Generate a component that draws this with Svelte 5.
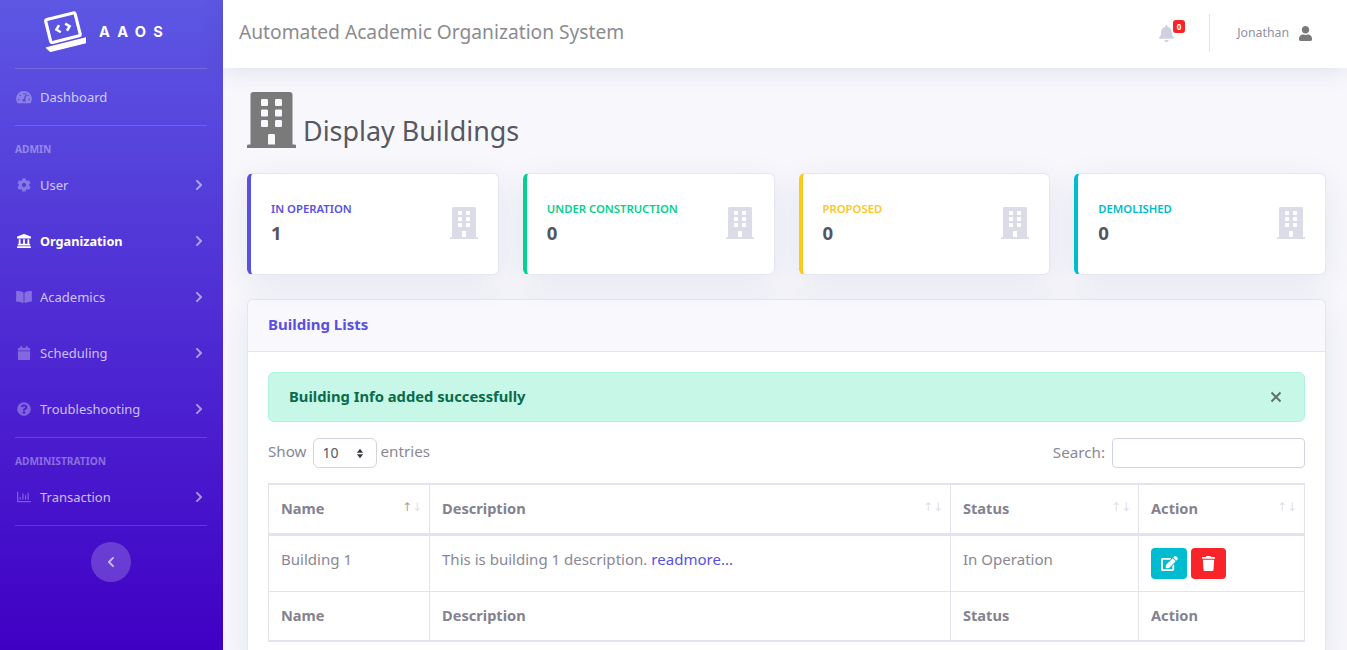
<script>
  const F = {
    building: "M436 480h-20V24c0-13.255-10.745-24-24-24H56C42.745 0 32 10.745 32 24v456H12c-6.627 0-12 5.373-12 12v20h448v-20c0-6.627-5.373-12-12-12zM128 76c0-6.627 5.373-12 12-12h40c6.627 0 12 5.373 12 12v40c0 6.627-5.373 12-12 12h-40c-6.627 0-12-5.373-12-12V76zm0 96c0-6.627 5.373-12 12-12h40c6.627 0 12 5.373 12 12v40c0 6.627-5.373 12-12 12h-40c-6.627 0-12-5.373-12-12v-40zm52 148h-40c-6.627 0-12-5.373-12-12v-40c0-6.627 5.373-12 12-12h40c6.627 0 12 5.373 12 12v40c0 6.627-5.373 12-12 12zm76 160h-64v-84c0-6.627 5.373-12 12-12h40c6.627 0 12 5.373 12 12v84zm64-172c0 6.627-5.373 12-12 12h-40c-6.627 0-12-5.373-12-12v-40c0-6.627 5.373-12 12-12h40c6.627 0 12 5.373 12 12v40zm0-96c0 6.627-5.373 12-12 12h-40c-6.627 0-12-5.373-12-12v-40c0-6.627 5.373-12 12-12h40c6.627 0 12 5.373 12 12v40zm0-96c0 6.627-5.373 12-12 12h-40c-6.627 0-12-5.373-12-12V76c0-6.627 5.373-12 12-12h40c6.627 0 12 5.373 12 12v40z",
    chevR: "M285.476 272.971L91.132 467.314c-9.373 9.373-24.569 9.373-33.941 0l-22.667-22.667c-9.357-9.357-9.375-24.522-.04-33.901L188.505 256 34.484 101.255c-9.335-9.379-9.317-24.544.04-33.901l22.667-22.667c9.373-9.373 24.569-9.373 33.941 0L285.475 239.03c9.373 9.372 9.373 24.568.001 33.941z",
    chevL: "M34.52 239.03L228.87 44.69c9.37-9.37 24.57-9.37 33.94 0l22.67 22.67c9.36 9.36 9.37 24.52.04 33.9L131.49 256l154.02 154.75c9.34 9.38 9.32 24.54-.04 33.9l-22.67 22.67c-9.37 9.37-24.57 9.37-33.94 0L34.52 272.97c-9.37-9.37-9.37-24.57 0-33.94z",
    bell: "M224 512c35.32 0 63.97-28.65 63.97-64H160.03c0 35.35 28.65 64 63.97 64zm215.39-149.71c-19.32-20.76-55.47-51.99-55.47-154.29 0-77.7-54.48-139.9-127.94-155.16V32c0-17.67-14.32-32-31.98-32s-31.98 14.33-31.98 32v20.84C118.56 68.1 64.08 130.3 64.08 208c0 102.3-36.15 133.53-55.47 154.29-6 6.45-8.66 14.16-8.61 21.71.11 16.4 12.98 32 32.1 32h383.8c19.12 0 32-15.6 32.1-32 .05-7.55-2.61-15.27-8.61-21.71z",
    user: "M224 256c70.7 0 128-57.3 128-128S294.7 0 224 0 96 57.3 96 128s57.3 128 128 128zm89.6 32h-16.7c-22.2 10.2-46.9 16-72.9 16s-50.6-5.8-72.9-16h-16.7C60.2 288 0 348.2 0 422.4V464c0 26.5 21.5 48 48 48h352c26.5 0 48-21.5 48-48v-41.6c0-74.2-60.2-134.4-134.4-134.4z",
    trash: "M432 32H312l-9.4-18.7A24 24 0 0 0 281.1 0H166.8a23.72 23.72 0 0 0-21.4 13.3L136 32H16A16 16 0 0 0 0 48v32a16 16 0 0 0 16 16h416a16 16 0 0 0 16-16V48a16 16 0 0 0-16-16zM53.2 467a48 48 0 0 0 47.9 45h245.8a48 48 0 0 0 47.9-45L416 128H32z",
    edit: "M402.6 83.2l90.2 90.2c3.8 3.8 3.8 10 0 13.8L274.4 405.6l-92.8 10.3c-12.4 1.4-22.9-9.1-21.5-21.5l10.3-92.8L388.8 83.2c3.8-3.8 10-3.8 13.8 0zm162-22.9l-48.8-48.8c-15.2-15.2-39.9-15.2-55.2 0l-35.4 35.4c-3.8 3.8-3.8 10 0 13.8l90.2 90.2c3.8 3.8 10 3.8 13.8 0l35.4-35.4c15.2-15.3 15.2-40 0-55.2zM384 346.2V448H64V128h229.8c3.2 0 6.2-1.3 8.5-3.5l40-40c7.6-7.6 2.2-20.5-8.5-20.5H48C21.5 64 0 85.5 0 112v352c0 26.5 21.5 48 48 48h352c26.5 0 48-21.5 48-48V306.2c0-10.7-12.9-16-20.5-8.5l-40 40c-2.2 2.3-3.5 5.3-3.5 8.5z",
    landmark: "M501.62 92.11L267.24 2.04a31.958 31.958 0 0 0-22.47 0L10.38 92.11A16.001 16.001 0 0 0 0 107.09V144c0 8.84 7.16 16 16 16h480c8.84 0 16-7.16 16-16v-36.91c0-6.67-4.14-12.64-10.38-14.98zM64 192v160H48c-8.84 0-16 7.16-16 16v48h448v-48c0-8.84-7.16-16-16-16h-16V192h-64v160h-96V192h-64v160h-96V192H64zm432 256H16c-8.84 0-16 7.16-16 16v32c0 8.84 7.16 16 16 16h480c8.84 0 16-7.16 16-16v-32c0-8.84-7.16-16-16-16z",
    book: "M542.22 32.05c-54.8 3.11-163.72 14.43-230.96 55.59-4.64 2.84-7.27 7.89-7.27 13.17v363.87c0 11.55 12.63 18.85 23.28 13.49 69.18-34.82 169.23-44.32 218.7-46.92 16.89-.89 30.02-14.43 30.02-30.66V62.75c.01-17.71-15.35-31.74-33.77-30.7zM264.73 87.64C197.5 46.48 88.58 35.17 33.78 32.05 15.36 31.01 0 45.04 0 62.75V400.6c0 16.24 13.13 29.78 30.02 30.66 49.49 2.6 149.59 12.11 218.77 46.95 10.62 5.35 23.21-1.94 23.21-13.46V100.63c0-5.29-2.62-10.14-7.27-12.99z",
    calendar: "M12 192h424c6.6 0 12 5.4 12 12v260c0 26.5-21.5 48-48 48H48c-26.5 0-48-21.5-48-48V204c0-6.6 5.4-12 12-12zm436-44v-36c0-26.5-21.5-48-48-48h-48V12c0-6.6-5.4-12-12-12h-40c-6.6 0-12 5.4-12 12v52H160V12c0-6.6-5.4-12-12-12h-40c-6.6 0-12 5.4-12 12v52H48C21.5 64 0 85.5 0 112v36c0 6.6 5.4 12 12 12h424c6.6 0 12-5.4 12-12z",
    question: "M504 256c0 136.997-111.043 248-248 248S8 392.997 8 256C8 119.083 119.043 8 256 8s248 111.083 248 248zM262.655 90c-54.497 0-89.255 22.957-116.549 63.758-3.536 5.286-2.353 12.415 2.715 16.258l34.699 26.31c5.205 3.947 12.621 3.008 16.665-2.122 17.864-22.658 30.113-35.797 57.303-35.797 20.429 0 45.698 13.148 45.698 32.958 0 14.976-12.363 22.667-32.534 33.976C247.128 238.528 216 254.941 216 296v4c0 6.627 5.373 12 12 12h56c6.627 0 12-5.373 12-12v-1.333c0-28.462 83.186-29.647 83.186-106.667 0-58.002-60.165-102-116.531-102zM256 338c-25.365 0-46 20.635-46 46 0 25.364 20.635 46 46 46s46-20.636 46-46c0-25.365-20.635-46-46-46z",
    chart: "M396.8 352h22.4c6.4 0 12.8-6.4 12.8-12.8V108.8c0-6.4-6.4-12.8-12.8-12.8h-22.4c-6.4 0-12.8 6.4-12.8 12.8v230.4c0 6.4 6.4 12.8 12.8 12.8zm-192 0h22.4c6.4 0 12.8-6.4 12.8-12.8V140.8c0-6.4-6.4-12.8-12.8-12.8h-22.4c-6.4 0-12.8 6.4-12.8 12.8v198.4c0 6.4 6.4 12.8 12.8 12.8zm96 0h22.4c6.4 0 12.8-6.4 12.8-12.8V204.8c0-6.4-6.4-12.8-12.8-12.8h-22.4c-6.4 0-12.8 6.4-12.8 12.8v134.4c0 6.4 6.4 12.8 12.8 12.8zm-192 0h22.4c6.4 0 12.8-6.4 12.8-12.8v-70.4c0-6.4-6.4-12.8-12.8-12.8h-22.4c-6.4 0-12.8 6.4-12.8 12.8v70.4c0 6.4 6.4 12.8 12.8 12.8zM496 400H48V80c0-8.84-7.16-16-16-16H16C7.16 64 0 71.16 0 80v336c0 17.67 14.33 32 32 32h464c8.84 0 16-7.16 16-16v-16c0-8.84-7.16-16-16-16z",
    cog: "M487.4 315.7l-42.6-24.6c4.3-23.2 4.3-47 0-70.2l42.6-24.6c4.9-2.8 7.1-8.6 5.5-14-11.1-35.6-30-67.8-54.7-94.6-3.8-4.1-10-5.1-14.8-2.3L380.8 110c-17.9-15.4-38.5-27.3-60.8-35.1V25.8c0-5.6-3.9-10.5-9.4-11.7-36.7-8.2-74.3-7.8-109.2 0-5.5 1.2-9.4 6.1-9.4 11.7V75c-22.2 7.9-42.8 19.8-60.8 35.1L88.7 85.5c-4.9-2.8-11-1.9-14.8 2.3-24.7 26.7-43.6 58.9-54.7 94.6-1.7 5.4.6 11.2 5.5 14L67.3 221c-4.3 23.2-4.3 47 0 70.2l-42.6 24.6c-4.9 2.8-7.1 8.6-5.5 14 11.1 35.6 30 67.8 54.7 94.6 3.8 4.1 10 5.1 14.8 2.3l42.6-24.6c17.9 15.4 38.5 27.3 60.8 35.1v49.2c0 5.6 3.9 10.5 9.4 11.7 36.7 8.2 74.3 7.8 109.2 0 5.5-1.2 9.4-6.1 9.4-11.7v-49.2c22.2-7.9 42.8-19.8 60.8-35.1l42.6 24.6c4.9 2.8 11 1.9 14.8-2.3 24.7-26.7 43.6-58.9 54.7-94.6 1.5-5.5-.7-11.3-5.6-14.1zM256 336c-44.1 0-80-35.9-80-80s35.9-80 80-80 80 35.9 80 80-35.9 80-80 80z",
    gauge: "M288 32C128.94 32 0 160.94 0 320c0 52.8 14.25 102.26 39.06 144.8 5.61 9.62 16.3 15.2 27.44 15.2h443c11.14 0 21.83-5.58 27.44-15.2C561.75 422.26 576 372.8 576 320c0-159.06-128.94-288-288-288zm0 64c14.71 0 26.58 10.13 30.32 23.65-1.11 2.26-2.64 4.23-3.45 6.67l-9.22 27.67c-5.13 3.49-10.97 6.01-17.64 6.01-17.67 0-32-14.33-32-32S270.33 96 288 96zM96 384c-17.67 0-32-14.33-32-32s14.33-32 32-32 32 14.33 32 32-14.33 32-32 32zm48-160c-17.67 0-32-14.33-32-32s14.33-32 32-32 32 14.33 32 32-14.33 32-32 32zm246.77-72.41l-61.33 184C343.13 347.33 352 364.54 352 384c0 11.72-3.38 22.55-8.88 32H232.88c-5.5-9.45-8.88-20.28-8.88-32 0-33.94 26.5-61.43 59.9-63.59l61.34-184.01c4.17-12.56 17.73-19.45 30.36-15.17 12.57 4.19 19.35 17.79 15.17 30.36zm14.66 57.2l15.52-46.55c3.47-1.29 7.13-2.23 11.05-2.23 17.67 0 32 14.33 32 32s-14.33 32-32 32c-11.38-.01-20.89-6.28-26.57-15.22zM480 384c-17.67 0-32-14.33-32-32s14.33-32 32-32 32 14.33 32 32-14.33 32-32 32z"
  };
  const stats = [
    { label: "In Operation", value: 1, color: "#5a50e4" },
    { label: "Under Construction", value: 0, color: "#04d28c" },
    { label: "Proposed", value: 0, color: "#ffc71c" },
    { label: "Demolished", value: 0, color: "#00bcd0" }
  ];
  const cols = ["Name", "Description", "Status", "Action"];
</script>

{#snippet icon(d, vb, cls)}
  <svg class={cls} viewBox="0 0 {vb} 512" aria-hidden="true"><path {d} fill="currentColor" /></svg>
{/snippet}

{#snippet navItem(label, d, vb, active = false, chev = true)}
  <div class="nav-item" class:active>
    <span class="nav-icon">{@render icon(d, vb, "ni")}</span>
    <span class="nav-label">{label}</span>
    {#if chev}{@render icon(F.chevR, 320, "chev")}{/if}
  </div>
{/snippet}

<div class="app">
  <aside class="sidebar">
    <div class="brand">
      <svg class="logo" viewBox="0 0 42 40" aria-hidden="true">
        <g transform="rotate(-14 21 20)" fill="none" stroke="#fff">
          <rect x="6.5" y="4.5" width="29" height="22.5" rx="1.5" stroke-width="3" />
          <path d="M18 12.5l-3.5 3.5 3.5 3.5M24 12.5l3.5 3.5-3.5 3.5" stroke-width="2.4" />
          <path d="M1 30.5h40l-2 4.5H4z" fill="#fff" stroke-width="1" stroke-linejoin="round" />
        </g>
      </svg>
      <span class="brand-text">AAOS</span>
    </div>
    <hr />
    {@render navItem("Dashboard", F.gauge, 576, false, false)}
    <hr />
    <div class="nav-head">ADMIN</div>
    {@render navItem("User", F.cog, 512)}
    {@render navItem("Organization", F.landmark, 512, true)}
    {@render navItem("Academics", F.book, 576)}
    {@render navItem("Scheduling", F.calendar, 448)}
    {@render navItem("Troubleshooting", F.question, 512)}
    <hr />
    <div class="nav-head">ADMINISTRATION</div>
    {@render navItem("Transaction", F.chart, 512)}
    <hr />
    <div class="toggle">{@render icon(F.chevL, 320, "toggle-i")}</div>
  </aside>

  <div class="right">
    <header class="topbar">
      <div class="top-title">Automated Academic Organization System</div>
      <div class="bell">
        {@render icon(F.bell, 448, "bell-i")}
        <span class="badge">0</span>
      </div>
      <div class="vdiv"></div>
      <span class="uname">Jonathan</span>
      {@render icon(F.user, 448, "user-i")}
    </header>

    <main class="main">
      <div class="page-head">
        {@render icon(F.building, 448, "head-i")}
        <h1>Display Buildings</h1>
      </div>

      <div class="stats">
        {#each stats as s}
          <div class="stat" style="border-left-color:{s.color}">
            <div class="stat-body">
              <div class="stat-label" style="color:{s.color}">{s.label}</div>
              <div class="stat-value">{s.value}</div>
            </div>
            {@render icon(F.building, 448, "stat-i")}
          </div>
        {/each}
      </div>

      <section class="panel">
        <div class="panel-head">Building Lists</div>
        <div class="panel-body">
          <div class="alert">
            <span>Building Info added successfully</span>
            <svg class="close" viewBox="0 0 12 12" aria-hidden="true"><path d="M1.5 1.5l9 9M10.5 1.5l-9 9" stroke="#5f6f69" stroke-width="1.9" /></svg>
          </div>
          <div class="controls">
            <div class="show">
              <span>Show</span>
              <div class="select">
                <span>10</span>
                <svg viewBox="0 0 10 14" class="sel-i" aria-hidden="true"><path d="M5 1l4 5H1zM5 13L1 8h8z" fill="#343a40" /></svg>
              </div>
              <span>entries</span>
            </div>
            <label class="search">Search:<input type="text" /></label>
          </div>
          <table>
            <colgroup><col class="c1" /><col class="c2" /><col class="c3" /><col class="c4" /></colgroup>
            <thead>
              <tr>
                {#each cols as c, i}
                  <th>
                    <div class="th-in">
                      <span>{c}</span>
                      <span class="sort"><span class:on={i === 0}>↑</span><span>↓</span></span>
                    </div>
                  </th>
                {/each}
              </tr>
            </thead>
            <tbody>
              <tr>
                <td class="txt">Building 1</td>
                <td class="txt">This is building 1 description. <span class="link">readmore...</span></td>
                <td class="txt">In Operation</td>
                <td>
                  <div class="actions">
                    <div class="btn info">{@render icon(F.edit, 576, "btn-i")}</div>
                    <div class="btn danger">{@render icon(F.trash, 448, "btn-i")}</div>
                  </div>
                </td>
              </tr>
            </tbody>
            <tfoot>
              <tr>{#each cols as c}<th>{c}</th>{/each}</tr>
            </tfoot>
          </table>
        </div>
      </section>
    </main>
  </div>
</div>

<style>
  :global(body) { margin: 0; overflow: hidden; }
  .app {
    display: flex; width: 1347px; height: 650px; overflow: hidden;
    font-family: "Noto Sans", "Liberation Sans", sans-serif;
    font-size: 15px; color: #8a8795; background: #f7f7fc;
  }
  .sidebar {
    width: 223px; flex: none; height: 650px; box-sizing: border-box;
    background: linear-gradient(180deg, #5d57e3 0%, #4000c4 100%);
  }
  .sidebar hr { border: 0; height: 1px; margin: 0 16px 0 15px; background: rgba(255,255,255,.16); }
  .brand { height: 68px; display: flex; align-items: center; padding-left: 42px; box-sizing: border-box; padding-bottom: 4px; }
  .logo { width: 44px; height: 42px; flex: none; }
  .brand-text { margin-left: 13px; color: #fff; font: 700 14.6px "Inter", sans-serif; letter-spacing: 7.2px; }
  .nav-item { height: 56px; display: flex; align-items: center; color: rgba(255,255,255,.72); padding-left: 16px; padding-right: 20px; font-size: 13px; }
  .nav-item.active { color: #fff; font-weight: 700; font-size: 12.7px; }
  .nav-icon { width: 24px; flex: none; display: flex; align-items: center; opacity: .42; }
  .active .nav-icon { opacity: 1; }
  :global(.ni) { width: 16px; height: 14px; }
  .nav-label { flex: 1; }
  :global(.chev) { width: 8px; height: 12px; color: rgba(255,255,255,.55); }
  .nav-head { height: 31px; box-sizing: border-box; padding: 17px 0 0 15px; font-size: 10.2px; line-height: 13px; font-weight: 700; color: rgba(255,255,255,.38); }
  .toggle { width: 40px; height: 40px; margin: 16px 0 0 91px; border-radius: 50%; background: rgba(255,255,255,.2); display: flex; align-items: center; justify-content: center; }
  :global(.toggle-i) { width: 8px; height: 12px; color: rgba(255,255,255,.65); }

  .right { flex: 1; min-width: 0; display: flex; flex-direction: column; }
  .topbar {
    height: 68px; box-sizing: border-box; flex: none; background: #fff; display: flex; align-items: center; padding: 0 35px 2px 16px;
    box-shadow: 0 2px 24px rgba(60,60,110,.13); position: relative; z-index: 1;
  }
  .top-title { flex: 1; font-size: 19.2px; color: #8b8b90; margin-top: -4px; }
  .bell { position: relative; width: 15px; height: 17px; margin-right: 35px; }
  :global(.bell-i) { width: 15px; height: 17px; color: #d1d0e1; display: block; }
  .badge { position: absolute; left: 14px; top: -5px; width: 12px; height: 13px; border-radius: 3px; background: #f9232a; color: #fff; font-size: 8px; line-height: 13px; font-weight: 700; text-align: center; }
  .vdiv { width: 1px; height: 38px; background: #e2e2ec; margin-right: 27px; }
  .uname { font-size: 12.3px; color: #8f91a5; margin-right: 10px; margin-top: -2px; }
  :global(.user-i) { width: 13px; height: 15px; color: #7a7a7a; }

  .main { flex: 1; padding: 24px 21px 0 24px; min-height: 0; }
  .page-head { display: flex; align-items: flex-end; gap: 7px; height: 56px; margin-bottom: 25px; }
  :global(.head-i) { width: 49px; height: 56px; color: #7a7a7a; flex: none; }
  h1 { margin: 0; font-size: 26.9px; line-height: 34px; font-weight: 400; color: #575761; }

  .stats { display: grid; grid-template-columns: repeat(4, 1fr); gap: 24px; margin-bottom: 24px; }
  .stat {
    height: 102px; box-sizing: border-box; background: #fff; border: 1px solid #e6e5f0; border-left: 4px solid; border-radius: 6px;
    display: flex; align-items: center; padding: 0 20px; box-shadow: 0 8px 32px rgba(60,60,110,.09);
  }
  .stat-body { flex: 1; margin-top: -1px; }
  .stat-label { font-size: 11.3px; line-height: 14px; font-weight: 600; text-transform: uppercase; }
  .stat-value { font-size: 18.6px; line-height: 26px; font-weight: 700; color: #55555f; margin-top: 4px; }
  :global(.stat-i) { width: 28px; height: 32px; color: #dcdce9; flex: none; margin-top: -2px; }

  .panel { background: #fff; border: 1px solid #e6e5f0; border-bottom: 0; border-radius: 6px 6px 0 0; box-shadow: 0 8px 32px rgba(60,60,110,.09); }
  .panel-head { height: 52px; box-sizing: border-box; background: #f8f8fd; border-bottom: 1px solid #e4e3ef; padding-left: 20px; line-height: 48px; font-size: 15px; font-weight: 700; color: #5a50e4; border-radius: 6px 6px 0 0; }
  .panel-body { padding: 20px; }
  .alert {
    height: 50px; box-sizing: border-box; background: #c7f7e6; border: 1px solid #aef3da; border-radius: 6px;
    display: flex; align-items: center; justify-content: space-between; padding: 0 22px 2px 20px;
    color: #0a6b4a; font-size: 14.75px; font-weight: 700;
  }
  .close { width: 12px; height: 12px; margin-top: 2px; }
  .controls { display: flex; justify-content: space-between; margin: 16px 0 15px; height: 30px; font-size: 15.2px; color: #8a8795; }
  .show { display: flex; align-items: flex-start; gap: 4px; line-height: 26px; }
  .select { width: 64px; height: 30px; margin-left: 2px; box-sizing: border-box; border: 1px solid #d4d3e3; border-radius: 6px; display: flex; align-items: center; justify-content: space-between; padding: 0 12px 0 9px; color: #55555f; line-height: 28px; font-size: 14px; }
  .sel-i { width: 8px; height: 11px; }
  .search { display: flex; align-items: flex-start; gap: 7px; line-height: 28px; }
  .search input { width: 193px; height: 30px; box-sizing: border-box; border: 1px solid #d4d3e3; border-radius: 4px; padding: 0; margin: 0; background: #fff; outline: 0; }

  table { width: 1037px; table-layout: fixed; border-collapse: separate; border-spacing: 0; border: 1px solid #e2e3ef; border-top-width: 2px; border-bottom-width: 2px; color: #8a8795; font-size: 15.05px; }
  .c1 { width: 160px; } .c2 { width: 521px; } .c3 { width: 188px; }
  th, td { padding: 0 12px; text-align: left; border-left: 1px solid #e2e3ef; box-sizing: border-box; }
  th:first-child, td:first-child { border-left: 0; }
  th { font-weight: 700; color: #84828f; font-size: 14.6px; padding-bottom: 2px; }
  thead th { height: 51px; padding-bottom: 3px; border-bottom: 3px solid #e2e3ef; }
  tbody td { height: 56px; border-bottom: 1px solid #e2e3ef; }
  td.txt { padding-bottom: 9px; }
  tfoot th { height: 48px; }
  .th-in { display: flex; justify-content: space-between; align-items: center; margin-right: -5px; }
  .sort { font: 12px "DejaVu Sans", sans-serif; color: #dfdfe8; display: flex; margin-top: -1px; }
  .sort .on { color: #a5a5b0; }
  .link { color: #5a50e4; }
  .actions { display: flex; gap: 4px; }
  .btn { height: 31px; border-radius: 4px; display: flex; align-items: center; justify-content: center; color: #fff; }
  .info { width: 36px; background: #00bcd0; }
  .danger { width: 35px; background: #f9232a; }
  :global(.btn-i) { height: 15px; width: 17px; }
</style>
